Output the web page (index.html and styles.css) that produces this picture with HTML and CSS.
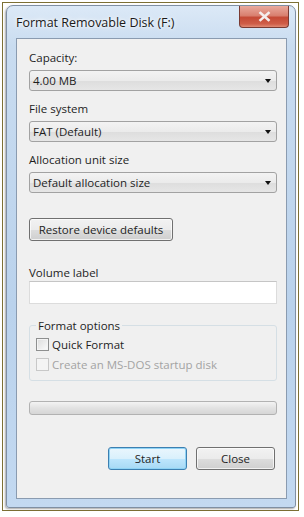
FILE: index.html
```html
<!DOCTYPE html>
<html lang="en">
<head>
    <meta charset="UTF-8">
    <meta name="viewport" content="width=device-width, initial-scale=1.0">
    <title>Format Removable Disk (F:)</title>
    <link rel="stylesheet" href="styles.css">
</head>
<body>
    <div class="shot">
        <div class="window">
            <div class="titlebar">
                <span class="title">Format Removable Disk (F:)</span>
                <button class="close-btn" aria-label="Close">
                    <svg width="13" height="11" viewBox="0 0 13 11">
                        <path d="M2.5 2 L10.5 9 M10.5 2 L2.5 9" stroke="#f4eeee" stroke-width="2.6" stroke-linecap="square"/>
                    </svg>
                </button>
            </div>

            <div class="client">
                <div class="field">
                    <label>Capacity:</label>
                    <div class="combo"><span>4.00 MB</span><span class="arrow"></span></div>
                </div>

                <div class="field">
                    <label>File system</label>
                    <div class="combo"><span>FAT (Default)</span><span class="arrow"></span></div>
                </div>

                <div class="field">
                    <label>Allocation unit size</label>
                    <div class="combo"><span>Default allocation size</span><span class="arrow"></span></div>
                </div>

                <button class="btn restore">Restore device defaults</button>

                <div class="field volume">
                    <label>Volume label</label>
                    <div class="textbox"></div>
                </div>

                <fieldset class="group">
                    <legend>Format options</legend>
                    <div class="check"><span class="box"></span>Quick Format</div>
                    <div class="check disabled"><span class="box"></span>Create an MS-DOS startup disk</div>
                </fieldset>

                <div class="progress"></div>

                <div class="actions">
                    <button class="btn default">Start</button>
                    <button class="btn">Close</button>
                </div>
            </div>
        </div>
    </div>
</body>
</html>
```

FILE: styles.css
```css
body {
    margin: 0;
    background-color: #ffffff;
    font-family: "Open Sans", "Noto Sans", sans-serif;
    font-size: 11.5px;
    color: #1e1e1e;
}
.shot {
    margin: 2px;
    width: 297px;
    height: 509px;
    border: 1px solid #7d7034;
    padding: 2px 0 0 3px;
    box-sizing: border-box;
}
.window {
    width: 290px;
    height: 503px;
    box-sizing: border-box;
    padding: 0 8px 8px 9px;
    border: 1px solid #7f8fa3;
    border-radius: 7px 7px 3px 3px;
    background: linear-gradient(to bottom, #dce9f7 0%, #c9dcf0 40px, #bad2ec 60%, #c3d9f1 100%);
    box-shadow: -1px 1px 2px rgba(0,0,0,0.35);
    display: flex;
    flex-direction: column;
}
.titlebar {
    height: 32px;
    flex: none;
    display: flex;
    align-items: flex-start;
    justify-content: space-between;
}
.title {
    margin-top: 8px;
    font-size: 12.5px;
    color: #1a1a1a;
    text-shadow: 0 0 6px #ffffff, 0 0 3px #ffffff;
}
.close-btn {
    width: 50px;
    height: 22px;
    margin-right: -2px;
    padding: 0;
    border: 1px solid #7a3a32;
    border-top: none;
    border-radius: 0 0 4px 4px;
    background: linear-gradient(to bottom, #e9aa9d 0%, #d98070 45%, #c54a36 55%, #cf5d48 85%, #e08a74 100%);
    display: flex;
    align-items: center;
    justify-content: center;
}
.client {
    flex: 1;
    background-color: #f0f0f0;
    border: 1px solid #8a9bb0;
    padding: 11px 9px 0 12px;
    display: flex;
    flex-direction: column;
}
.field {
    display: flex;
    flex-direction: column;
    margin-bottom: 10px;
}
.field label {
    line-height: 15px;
    margin-bottom: 5px;
}
.combo {
    height: 21px;
    box-sizing: border-box;
    border: 1px solid #a2a2a2;
    border-radius: 3px;
    background: linear-gradient(to bottom, #f3f3f3 0%, #ebebeb 50%, #dddddd 51%, #e6e6e6 100%);
    display: flex;
    align-items: center;
    justify-content: space-between;
    padding: 0 5px 0 3px;
}
.arrow {
    width: 0;
    height: 0;
    border-left: 3.5px solid transparent;
    border-right: 3.5px solid transparent;
    border-top: 4px solid #111111;
}
.btn {
    font-family: inherit;
    font-size: 11.5px;
    color: #1e1e1e;
    height: 23px;
    border: 1px solid #707070;
    border-radius: 3px;
    background: linear-gradient(to bottom, #f2f2f2 0%, #ebebeb 50%, #dddddd 51%, #cfcfcf 100%);
    box-shadow: inset 0 0 0 1px rgba(255,255,255,0.7);
    padding: 0;
}
.restore {
    align-self: flex-start;
    width: 144px;
    margin-top: 15px;
}
.volume {
    margin-top: 24px;
}
.volume label {
    margin-bottom: 1px;
}
.textbox {
    height: 23px;
    box-sizing: border-box;
    border: 1px solid #dcdcdc;
    border-top-color: #c5c5c5;
    background-color: #ffffff;
}
.group {
    margin: 5px 0 0 0;
    height: 62px;
    box-sizing: border-box;
    border: 1px solid #d5dfe5;
    border-radius: 3px;
    padding: 2px 0 0 6px;
}
.group legend {
    padding: 0 2px;
    margin-left: 0;
    line-height: 13px;
}
.check {
    display: flex;
    align-items: center;
    height: 20px;
}
.box {
    width: 13px;
    height: 13px;
    box-sizing: border-box;
    border: 1px solid #8e8f8f;
    background: linear-gradient(135deg, #dcdcdc, #fbfbfb);
    box-shadow: inset 0 0 0 1px #f4f4f4;
    margin-right: 3px;
}
.check.disabled {
    color: #a3a3a3;
}
.check.disabled .box {
    border-color: #c8c8c8;
    background: #f4f4f4;
}
.progress {
    margin-top: 20px;
    height: 14px;
    box-sizing: border-box;
    border: 1px solid #b2b2b2;
    border-radius: 3px;
    background: linear-gradient(to bottom, #f3f3f3 0%, #e2e2e2 50%, #d6d6d6 100%);
}
.actions {
    margin-top: 32px;
    display: flex;
    justify-content: flex-end;
    gap: 9px;
    padding-right: 2px;
}
.actions .btn {
    width: 79px;
}
.btn.default {
    border-color: #3c7fb1;
    background: linear-gradient(to bottom, #eaf6fd 0%, #d9f0fc 50%, #bee6fd 51%, #a7d9f5 100%);
    box-shadow: inset 0 0 0 1px #8fd3f5;
}
```
